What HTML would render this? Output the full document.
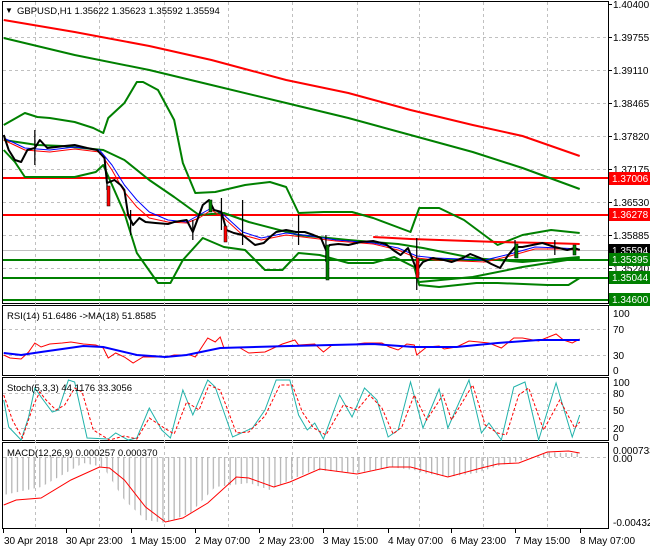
<!DOCTYPE html>
<html><head><meta charset="utf-8"><style>
html,body{margin:0;padding:0;background:#fff;}
svg{display:block;font-family:"Liberation Sans",sans-serif;}
</style></head><body>
<svg width="650" height="550" viewBox="0 0 650 550" xmlns="http://www.w3.org/2000/svg">
<defs>
<pattern id="hist" width="4.5" height="10" patternUnits="userSpaceOnUse"><rect x="0" y="0" width="1" height="10" fill="#b4b4b4"/></pattern>
</defs>
<rect width="650" height="550" fill="#fff"/>
<g fill="none" stroke="#000" stroke-width="1">
<rect x="2.5" y="1.5" width="606" height="302"/>
<rect x="2.5" y="305.5" width="606" height="70"/>
<rect x="2.5" y="377.5" width="606" height="63"/>
<rect x="2.5" y="442.5" width="606" height="86"/>
</g>
<g stroke="#c0c0c0" stroke-dasharray="3,3" stroke-width="1">
<line x1="3" x2="608" y1="37.5" y2="37.5"/><line x1="3" x2="608" y1="70.5" y2="70.5"/><line x1="3" x2="608" y1="103.5" y2="103.5"/><line x1="3" x2="608" y1="136.5" y2="136.5"/><line x1="3" x2="608" y1="169.5" y2="169.5"/><line x1="3" x2="608" y1="202.5" y2="202.5"/><line x1="3" x2="608" y1="235.5" y2="235.5"/><line x1="3" x2="608" y1="268.5" y2="268.5"/>
<line x1="3" x2="608" y1="329.5" y2="329.5"/><line x1="3" x2="608" y1="355.5" y2="355.5"/>
<line x1="3" x2="608" y1="393.5" y2="393.5"/><line x1="3" x2="608" y1="410.5" y2="410.5"/><line x1="3" x2="608" y1="428.5" y2="428.5"/>
<line x1="3" x2="608" y1="457.5" y2="457.5"/>
<line x1="35.5" x2="35.5" y1="2" y2="528"/><line x1="99.5" x2="99.5" y1="2" y2="528"/><line x1="164.5" x2="164.5" y1="2" y2="528"/><line x1="228.5" x2="228.5" y1="2" y2="528"/><line x1="292.5" x2="292.5" y1="2" y2="528"/><line x1="357.5" x2="357.5" y1="2" y2="528"/><line x1="419.5" x2="419.5" y1="2" y2="528"/><line x1="483.5" x2="483.5" y1="2" y2="528"/><line x1="547.5" x2="547.5" y1="2" y2="528"/>
</g>
<line x1="3" x2="608" y1="250.5" y2="250.5" stroke="#c0c0c0"/>
<g stroke-width="2">
<line x1="3" x2="608" y1="178" y2="178" stroke="#f00"/>
<line x1="3" x2="608" y1="215" y2="215" stroke="#f00"/>
<line x1="3" x2="608" y1="260" y2="260" stroke="#008000"/>
<line x1="3" x2="608" y1="278" y2="278" stroke="#008000"/>
<line x1="3" x2="608" y1="300" y2="300" stroke="#008000"/>
</g>
<g transform="scale(1.244,1)" fill="none" stroke-linejoin="round">
<polyline vector-effect="non-scaling-stroke" stroke="#f00" stroke-width="2" points="3,20 60,32 120,46 170,60 230,80 280,93 330,110 380,125 420,136 466,156"/>
<polyline vector-effect="non-scaling-stroke" stroke="#008000" stroke-width="2" points="3,38 60,55 120,70 170,85 230,103 280,118 330,135 380,152 420,168 466,189"/>
<polyline vector-effect="non-scaling-stroke" stroke="#008000" stroke-width="2" points="3,125 20,113 30,117 40,118 60,122 75,128 83,133 87,118 100,103 110,82 115,82 127,90 140,120 147,163 157,193 173,192 197,185 217,182 230,187 240,213 260,212 283,212 300,218 330,232 337,208 353,208 373,220 400,245 420,235 443,230 466,233"/>
<polyline vector-effect="non-scaling-stroke" stroke="#008000" stroke-width="2" points="3,150 12,162 20,177 40,177 60,177 77,172 83,165 100,213 110,253 127,283 137,283 147,260 163,238 180,247 197,250 213,270 227,270 240,253 257,255 280,263 300,263 317,257 333,267 337,285 353,287 383,283 400,283 440,285 457,285 466,278"/>
<polyline vector-effect="non-scaling-stroke" stroke="#008000" stroke-width="2" points="3,140 30,145 50,146 83,150 100,160 120,180 140,197 160,215 180,213 200,222 240,235 280,240 320,244 340,248 380,258 420,262 466,257"/>
<polyline vector-effect="non-scaling-stroke" stroke="#008000" stroke-width="2" points="337,282 380,277 420,267 466,258"/>
<polyline vector-effect="non-scaling-stroke" stroke="#f00" stroke-width="2" points="300,237 330,239 400,242 440,243 466,244"/>
<polyline vector-effect="non-scaling-stroke" stroke="#00f" stroke-width="1" points="3,138 20,148 40,150 60,147 80,150 90,165 100,185 110,200 120,212 135,220 150,222 160,215 170,208 180,215 195,232 210,238 230,233 250,236 270,240 300,243 320,248 335,256 350,258 370,259 390,260 410,254 430,247 450,248 466,249"/>
<polyline vector-effect="non-scaling-stroke" stroke="#f00" stroke-width="1" points="3,140 20,150 40,152 60,149 80,152 90,170 100,192 110,207 120,218 135,222 150,223 160,218 170,210 180,218 195,235 210,240 230,235 250,238 270,241 300,244 320,250 335,258 350,260 370,261 390,262 410,256 430,249 450,249 466,250"/>
<polyline vector-effect="non-scaling-stroke" stroke="#000" stroke-width="2" points="3,135 7,150 12,160 17,162 22,150 28,148 32,140 38,148 45,147 52,146 60,145 70,148 78,150 84,158 86,183 92,180 97,185 100,190 103,215 107,225 112,218 117,222 125,223 135,224 140,222 150,220 155,232 158,222 163,205 168,200 172,210 178,212 182,230 188,233 195,235 200,240 205,245 212,243 218,236 222,232 230,230 238,232 245,232 252,235 258,238 262,250 265,245 272,244 280,245 290,242 300,241 310,244 316,250 322,255 328,248 335,270 340,262 348,258 357,260 363,262 372,258 378,254 386,258 395,264 402,268 408,256 414,247 420,247 428,245 436,243 446,247 456,250 462,248 466,250"/>
<g stroke="#000" stroke-width="1" vector-effect="non-scaling-stroke">
<line x1="28" y1="130" x2="28" y2="165"/><line x1="86" y1="175" x2="86" y2="190"/><line x1="105" y1="210" x2="105" y2="235"/><line x1="155" y1="220" x2="155" y2="240"/><line x1="178" y1="198" x2="178" y2="230"/><line x1="195" y1="200" x2="195" y2="245"/><line x1="240" y1="215" x2="240" y2="245"/><line x1="262" y1="235" x2="262" y2="262"/><line x1="335" y1="238" x2="335" y2="290"/><line x1="414" y1="240" x2="414" y2="258"/><line x1="446" y1="240" x2="446" y2="255"/>
</g>
</g>
<g stroke="#000" stroke-width=".5">
<rect x="107" y="186" width="3" height="20" fill="#f00"/>
<rect x="209" y="200" width="3" height="12" fill="#008000"/>
<rect x="224" y="226" width="3" height="16" fill="#f00"/>
<rect x="326" y="245" width="3" height="35" fill="#008000"/>
<rect x="416" y="258" width="3" height="20" fill="#f00"/>
<rect x="515" y="244" width="3" height="14" fill="#008000"/>
<rect x="573" y="245" width="3" height="10" fill="#008000"/>
</g>
<g transform="translate(0,300) scale(1.244,1)" fill="none">
<polyline vector-effect="non-scaling-stroke" stroke="#f00" stroke-width="1" points="3,55 8,58 17,59 23,52 28,43 33,47 40,44 50,43 57,42 67,44 77,45 83,48 87,58 93,53 100,57 107,63 115,57 133,57 140,55 153,55 157,57 167,38 173,42 177,37 180,48 193,48 200,53 213,52 227,44 237,40 240,45 253,44 260,52 267,45 280,45 293,43 307,43 313,47 320,50 327,44 333,45 335,55 343,47 353,46 357,49 367,47 377,41 393,43 403,48 413,38 420,38 433,41 447,34 453,40 460,43 466,39"/>
<polyline vector-effect="non-scaling-stroke" stroke="#00f" stroke-width="2" points="3,53 17,55 33,52 67,46 83,47 110,55 133,57 150,55 177,48 233,46 300,44 333,47 367,47 400,43 433,40 466,40"/>
</g>
<g transform="translate(0,300) scale(1.244,1)" fill="none">
<polyline vector-effect="non-scaling-stroke" stroke="#20b2aa" stroke-width="1" points="3,100 7,127 17,140 23,117 28,88 33,97 42,112 47,110 55,80 60,82 70,138 87,139 93,133 103,140 110,138 120,108 130,130 137,138 147,90 155,115 167,80 173,87 187,137 203,128 213,110 222,80 233,80 240,115 247,130 253,123 260,139 273,95 283,117 293,88 303,100 312,137 320,130 330,82 340,128 353,89 360,128 377,80 387,133 393,123 403,140 413,87 422,82 433,140 447,83 460,137 466,115"/>
<polyline vector-effect="non-scaling-stroke" stroke="#f00" stroke-width="1" stroke-dasharray="3,2" points="3,95 10,120 18,138 27,105 32,92 37,100 45,110 52,105 60,88 66,92 75,130 88,140 100,136 110,139 120,118 132,128 140,134 150,102 160,110 168,85 177,90 190,133 200,132 213,116 225,85 235,85 243,112 252,128 262,135 276,105 287,110 297,95 307,108 316,134 323,127 333,95 343,120 356,95 363,120 380,85 390,125 400,133 407,135 417,95 425,88 437,130 450,100 462,128 466,122"/>
</g>
<g transform="translate(0,300) scale(1.244,1)">
<polygon fill="url(#hist)" points="3,157 466,157 466,153 453,153 440,152 433,156 420,160 400,166 383,173 360,177 340,173 333,170 313,167 287,173 253,170 233,180 217,190 200,183 173,187 153,213 133,223 117,220 100,200 83,167 67,163 33,187 3,195"/>
<polyline fill="none" vector-effect="non-scaling-stroke" stroke="#f00" stroke-width="1" points="3,205 13,200 33,198 57,180 80,167 88,168 100,180 117,207 133,222 147,218 167,203 190,177 200,178 220,187 233,182 257,169 287,174 313,167 330,167 360,177 387,168 400,164 417,163 440,152 457,151 466,153"/>
</g>
<text x="5" y="13" font-size="8" fill="#000">▼</text>
<text x="17" y="14" font-size="9.5" fill="#000">GBPUSD,H1  1.35622 1.35623 1.35592 1.35594</text>
<text x="7" y="319" font-size="9.5" fill="#000">RSI(14) 51.6486  -&gt;MA(18) 51.8585</text>
<text x="7" y="391" font-size="9.5" fill="#000">Stoch(5,3,3) 44.1176 33.3056</text>
<text x="7" y="456" font-size="9.5" fill="#000">MACD(12,26,9) 0.000257 0.000370</text>
<g font-size="10" fill="#000">
<text x="613" y="8">1.40400</text>
<text x="613" y="41">1.39755</text>
<text x="613" y="74">1.39110</text>
<text x="613" y="107">1.38465</text>
<text x="613" y="140">1.37820</text>
<text x="613" y="173">1.37175</text>
<text x="613" y="206">1.36530</text>
<text x="613" y="239">1.35885</text>
<text x="613" y="272">1.35240</text>
<text x="613" y="317">100</text>
<text x="613" y="333">70</text>
<text x="613" y="359">30</text>
<text x="613" y="374">0</text>
<text x="613" y="386">100</text>
<text x="613" y="397">80</text>
<text x="613" y="414">50</text>
<text x="613" y="432">20</text>
<text x="613" y="441">0</text>
<text x="613" y="454">0.000733</text>
<text x="613" y="462">0.00</text>
<text x="613" y="526">-0.004322</text>
</g>
<g stroke="#000"><line x1="609" x2="612" y1="4.5" y2="4.5"/><line x1="609" x2="612" y1="37.5" y2="37.5"/><line x1="609" x2="612" y1="70.5" y2="70.5"/><line x1="609" x2="612" y1="103.5" y2="103.5"/><line x1="609" x2="612" y1="136.5" y2="136.5"/><line x1="609" x2="612" y1="169.5" y2="169.5"/><line x1="609" x2="612" y1="202.5" y2="202.5"/><line x1="609" x2="612" y1="235.5" y2="235.5"/><line x1="609" x2="612" y1="268.5" y2="268.5"/></g>
<rect x="609" y="172" width="41" height="13" fill="#f00"/><text x="612" y="182" font-size="10" fill="#fff">1.37006</text>
<rect x="609" y="208" width="41" height="13" fill="#f00"/><text x="612" y="218" font-size="10" fill="#fff">1.36278</text>
<rect x="609" y="244" width="41" height="13" fill="#000"/><text x="612" y="254" font-size="10" fill="#fff">1.35594</text>
<rect x="609" y="253" width="41" height="13" fill="#008000"/><text x="612" y="263" font-size="10" fill="#fff">1.35395</text>
<rect x="609" y="271" width="41" height="13" fill="#008000"/><text x="612" y="281" font-size="10" fill="#fff">1.35044</text>
<rect x="609" y="293" width="41" height="13" fill="#008000"/><text x="612" y="303" font-size="10" fill="#fff">1.34600</text>
<g stroke="#000"><line x1="3.5" x2="3.5" y1="529" y2="533"/><line x1="66.5" x2="66.5" y1="529" y2="533"/><line x1="131.5" x2="131.5" y1="529" y2="533"/><line x1="195.5" x2="195.5" y1="529" y2="533"/><line x1="259.5" x2="259.5" y1="529" y2="533"/><line x1="323.5" x2="323.5" y1="529" y2="533"/><line x1="388.5" x2="388.5" y1="529" y2="533"/><line x1="451.5" x2="451.5" y1="529" y2="533"/><line x1="515.5" x2="515.5" y1="529" y2="533"/><line x1="580.5" x2="580.5" y1="529" y2="533"/></g>
<g font-size="10" fill="#000">
<text x="4" y="544">30 Apr 2018</text>
<text x="66" y="544">30 Apr 23:00</text>
<text x="131" y="544">1 May 15:00</text>
<text x="195" y="544">2 May 07:00</text>
<text x="259" y="544">2 May 23:00</text>
<text x="323" y="544">3 May 15:00</text>
<text x="388" y="544">4 May 07:00</text>
<text x="451" y="544">6 May 23:00</text>
<text x="515" y="544">7 May 15:00</text>
<text x="580" y="544">8 May 07:00</text>
</g>
</svg>
</body></html>
